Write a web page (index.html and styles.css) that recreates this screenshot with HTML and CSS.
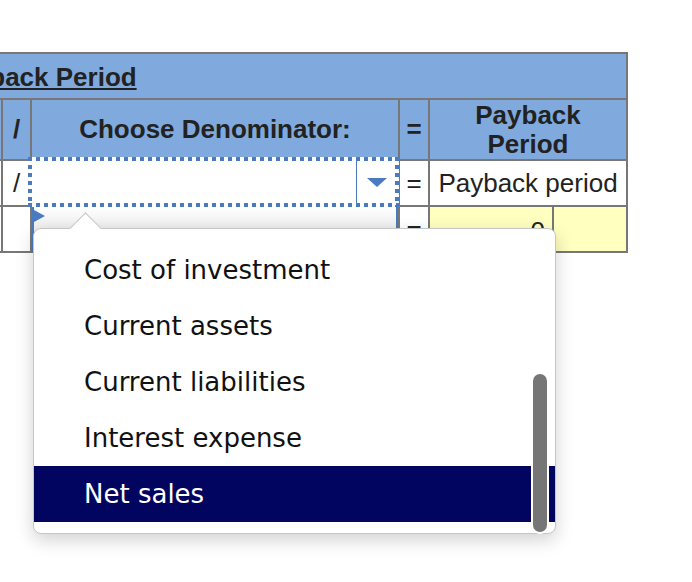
FILE: index.html
```html
<!DOCTYPE html>
<html lang="en">
<head>
	<meta charset="utf-8" />
	<title>Payback Period</title>
	<link rel="stylesheet" href="styles.css">
</head>
<body>
	<div class="page">
		<div class="sheet">
			<div class="cell title"><span>Payback Period</span></div>

			<div class="cell head"></div>
			<div class="cell head">/</div>
			<div class="cell head">Choose Denominator:</div>
			<div class="cell head">=</div>
			<div class="cell head wide">Payback<br />Period</div>

			<div class="cell"></div>
			<div class="cell">/</div>
			<div class="cell pick focus">
				<span class="pick-field"></span>
				<span class="pick-btn"><i class="caret"></i></span>
			</div>
			<div class="cell">=</div>
			<div class="cell wide">Payback period</div>

			<div class="cell"></div>
			<div class="cell"></div>
			<div class="cell pick-open"><i class="flag"></i></div>
			<div class="cell">=</div>
			<div class="cell entry num">0</div>
			<div class="cell entry"></div>
		</div>

		<div class="menu">
			<div class="opt">Cost of investment</div>
			<div class="opt">Current assets</div>
			<div class="opt">Current liabilities</div>
			<div class="opt">Interest expense</div>
			<div class="opt sel">Net sales</div>
			<div class="thumb"></div>
		</div>
	</div>
</body>
</html>
```

FILE: styles.css
```css
body {
	margin:0;
	overflow:hidden;
	background:#fff;
}
.page {
	position:relative;
	height:530px;
	padding-top:52px;
}
/*-------------------*/
.sheet {
	display:grid;
	grid-template-columns:79px 27px 366px 28px 122px 72px;
	grid-template-rows:44px 59px 44px 44px;
	gap:2px;
	padding:2px;
	width:max-content;
	margin-left:-80px;
	background:#777;
	font-family:"Liberation Sans", Arial, sans-serif;
	font-size:26px;
	color:#222;
}
.cell {
	display:flex;
	align-items:center;
	justify-content:center;
	text-align:center;
	line-height:29px;
	background:#fff;
}
.title {
	grid-column:1 / -1;
	justify-content:flex-start;
	padding:3px 0 0 21px;
	background:#80aadd;
	font-weight:bold;
	text-decoration:underline;
}
.head {
	background:#80aadd;
	font-weight:bold;
}
.wide {
	grid-column:span 2;
}
.entry {
	background:#ffffc0;
}
.num {
	justify-content:flex-end;
	padding:4px 7px 0 0;
}
/*-------------------*/
.pick {
	position:relative;
	margin:-4px -1px -2px -4px;
	padding:4px;
	justify-content:stretch;
	align-items:stretch;
}
/* focus ring drawn as square dots */
.focus::after {
	content:'';
	position:absolute;
	inset:0;
	background:
		repeating-linear-gradient(90deg, #4a7abf 0 4px, transparent 4px 8px) top left / 100% 4px no-repeat,
		repeating-linear-gradient(90deg, #4a7abf 0 4px, transparent 4px 8px) bottom left / 100% 4px no-repeat,
		repeating-linear-gradient(180deg, #4a7abf 0 4px, transparent 4px 8px) top left / 4px 100% no-repeat,
		repeating-linear-gradient(180deg, #4a7abf 0 4px, transparent 4px 8px) top right / 4px 100% no-repeat;
}
.pick-field {
	flex:1;
}
.pick-btn {
	width:39px;
	border-left:1px solid #4a7abf;
	display:flex;
	align-items:center;
	justify-content:center;
	box-sizing:border-box;
}
.caret {
	width:0;
	height:0;
	margin-left:1px;
	border-left:10px solid transparent;
	border-right:10px solid transparent;
	border-top:9px solid #4a7abf;
}
.pick-open {
	position:relative;
	border-left:2px solid #4a7abf;
	border-right:2px solid #4a7abf;
	background:linear-gradient(#fff, #dadada);
}
.flag {
	position:absolute;
	left:0;
	top:3px;
	width:0;
	height:0;
	border-left:11px solid #4a7abf;
	border-top:6px solid transparent;
	border-bottom:6px solid transparent;
}
/*-------------------*/
.menu {
	position:absolute;
	left:33px;
	top:228px;
	width:523px;
	height:306px;
	box-sizing:border-box;
	padding-top:13px;
	border:1px solid #c6c6c6;
	border-radius:8px;
	background:#fff;
	box-shadow:0 6px 18px rgba(0,0,0,0.18);
	font-family:"DejaVu Sans", Verdana, sans-serif;
	font-size:26px;
	color:#111;
}
.menu::before {
	content:'';
	position:absolute;
	left:40px;
	top:-12px;
	width:22px;
	height:22px;
	background:#fff;
	border-top:1px solid #c6c6c6;
	border-left:1px solid #c6c6c6;
	transform:rotate(45deg);
}
.opt {
	position:relative;
	height:56px;
	line-height:56px;
	padding-left:50px;
	white-space:nowrap;
}
.sel {
	background:#020560;
	color:#fff;
}
.thumb {
	position:absolute;
	right:6px;
	top:143px;
	width:14px;
	height:158px;
	border:2px solid #fff;
	border-radius:9px;
	background:#767676;
}
```
